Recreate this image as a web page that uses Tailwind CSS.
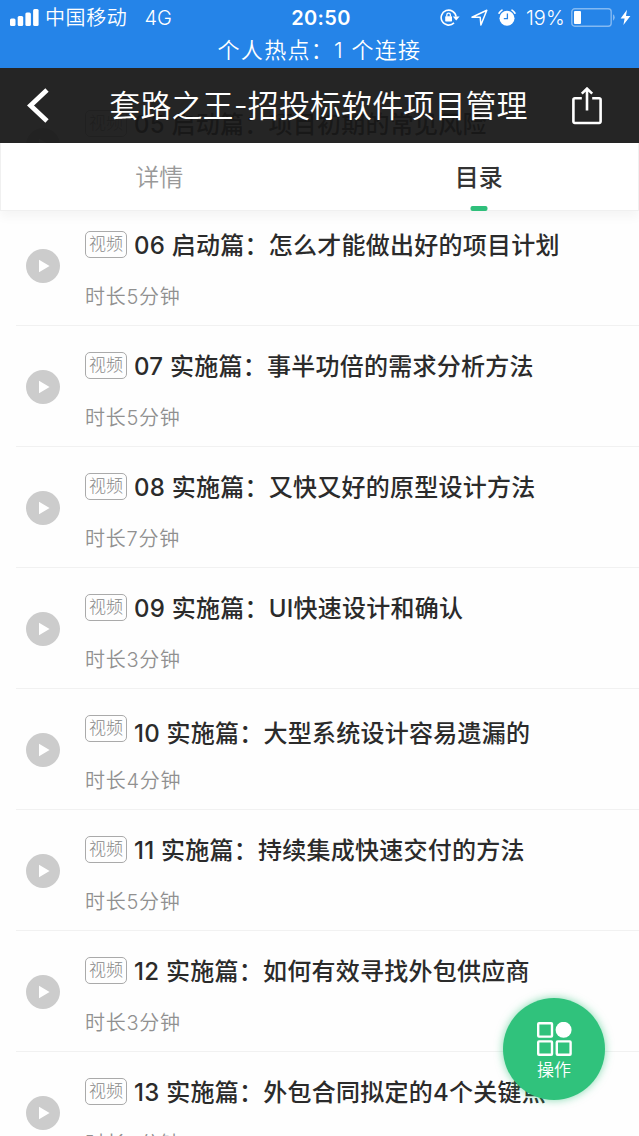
<!DOCTYPE html>
<html lang="zh-CN">
<head>
  <meta charset="UTF-8" />
  <title>套路之王-招投标软件项目管理</title>
  <script src="https://cdn.jsdelivr.net/npm/@tailwindcss/browser@4"></script>
</head>
<body class="bg-white font-['Inter','Noto_Sans_CJK_SC',sans-serif]">
<div class="relative w-[639px] h-[1136px] overflow-hidden bg-[#fefefe]">

  <ul id="lessonList" class="pt-[84px]"></ul>

  <!-- Fixed top: status bar, nav bar, tabs -->
  <header class="absolute inset-x-0 top-0 z-10">
    <div class="h-[68px] bg-[#2584e8] text-white">
      <div class="relative flex items-center h-[35px] pl-[10px] pr-[8px]">
        <svg class="w-[29px] h-[17px] shrink-0" viewBox="0 0 29 17" fill="currentColor">
          <rect x="0" y="9.5" width="5.5" height="7.5" rx="1.5"/>
          <rect x="7.7" y="7" width="5.5" height="10" rx="1.5"/>
          <rect x="15.4" y="3.5" width="5.5" height="13.5" rx="1.5"/>
          <rect x="23.1" y="0" width="5.5" height="17" rx="1.5"/>
        </svg>
        <span class="ml-[6px] pt-px text-[20px] leading-none tracking-[0.6px] font-[350]">中国移动</span>
        <span class="ml-[17px] pt-px text-[20px] leading-none font-[350]">4G</span>
        <span class="absolute inset-x-0 left-[3px] pt-px text-center text-[20px] leading-none font-semibold tracking-[0.3px]">20:50</span>

        <div class="ml-auto flex items-center">
          <!-- rotation lock -->
          <svg class="w-[20px] h-[17px]" viewBox="0 0 20 17" fill="none" stroke="currentColor" stroke-width="1.6">
            <path d="M16.1 7.6A7.5 7.5 0 1 0 14 13.9"/>
            <path d="M12.8 7.4h6.8l-3.4 4.2z" fill="currentColor" stroke="none"/>
            <rect x="5.2" y="7.2" width="6.8" height="5.2" rx=".6" fill="currentColor" stroke="none"/>
            <path d="M6.8 7.6V6a1.8 1.8 0 0 1 3.6 0v1.6" stroke-width="1.3"/>
          </svg>
          <!-- location -->
          <svg class="ml-[11px] w-[17px] h-[17px]" viewBox="0 0 17 17" fill="none" stroke="currentColor" stroke-width="1.5" stroke-linejoin="round">
            <path d="M1 8.2 15.8 1.2 9.9 16 9.2 8.2z"/>
          </svg>
          <!-- alarm -->
          <svg class="ml-[10px] w-[18px] h-[17px]" viewBox="0 0 18 17">
            <circle cx="9" cy="9.2" r="7.5" fill="currentColor"/>
            <path d="M1 4.2A10 10 0 0 1 4 1.2M17 4.2A10 10 0 0 0 14 1.2" fill="none" stroke="currentColor" stroke-width="1.6" stroke-linecap="round"/>
            <path d="M9.4 4.6V9.6H5.8" fill="none" stroke="#2584e8" stroke-width="1.3"/>
          </svg>
          <span class="ml-[10px] w-[41px] whitespace-nowrap pt-px text-[20px] leading-none font-[350]">19%</span>
          <!-- battery -->
          <svg class="ml-[4px] w-[46px] h-[19px]" viewBox="0 0 46 19">
            <rect x=".8" y=".8" width="39.4" height="17.4" rx="3" fill="none" stroke="#83b9f2" stroke-width="1.4"/>
            <rect x="3" y="3" width="7" height="13" rx="1" fill="#fff"/>
            <path d="M42 6.3a3.8 3.8 0 0 1 0 6.4z" fill="#83b9f2"/>
          </svg>
          <svg class="ml-[3px] w-[11px] h-[17px]" viewBox="0 0 11 17" fill="currentColor">
            <path d="M7 .8.6 9.4h4L3.4 16 10.4 7H6z"/>
          </svg>
        </div>
      </div>
      <p class="h-[30px] text-center text-[22px] leading-[30px] tracking-[1.3px] font-[350]">个人热点：1 个连接</p>
    </div>

    <nav class="flex items-center h-[75px] pl-[27px] pr-[37px] bg-[#171717]/94 text-white">
      <svg class="w-[22px] h-[36px] shrink-0" viewBox="0 0 22 36" fill="none" stroke="currentColor" stroke-width="4.8">
        <path d="M20 2 3.5 17.5 20 33"/>
      </svg>
      <h1 class="grow pl-[16px] pt-px text-center text-[31px] leading-[40px] tracking-[0.1px] whitespace-nowrap font-[350]">套路之王-招投标软件项目管理</h1>
      <svg class="w-[30px] h-[38px] shrink-0" viewBox="0 0 30 38" fill="none" stroke="currentColor" stroke-width="2.6">
        <path d="M9.8 11.3H2.8a1.4 1.4 0 0 0-1.4 1.4V34.6A1.4 1.4 0 0 0 2.8 36H27.2A1.4 1.4 0 0 0 28.6 34.6V12.7A1.4 1.4 0 0 0 27.2 11.3H20.2"/>
        <path d="M15 23.5V2M9.8 6.6 15 1.6 20.2 6.6"/>
      </svg>
    </nav>

    <div class="grid grid-cols-2 h-[68px] bg-white border-x border-b border-[#f0f0f0] shadow-[0_6px_10px_rgba(0,0,0,0.04)] text-[24px]">
      <a class="flex items-center justify-center pt-[2px] pr-[2px] font-[350] text-[#999]">详情</a>
      <a class="relative flex items-center justify-center pt-[2px] font-medium text-[#333]">目录
        <i class="absolute -bottom-px left-1/2 -translate-x-1/2 w-[17px] h-[5px] rounded-[2px] bg-[#2fbf7b]"></i>
      </a>
    </div>
  </header>

  <!-- Floating action button -->
  <button class="absolute left-[503px] top-[998px] z-20 flex flex-col items-center w-[102px] h-[102px] pt-[24px] rounded-full bg-[#30c27c] text-white shadow-[0_0_8px_rgba(48,194,124,0.6)]">
    <svg class="w-[35px] h-[34px]" viewBox="0 0 35 34" fill="none" stroke="currentColor" stroke-width="2.4">
      <rect x="1.2" y="1.2" width="13.8" height="13.4" rx=".8"/>
      <circle cx="26.6" cy="7.8" r="8" fill="currentColor" stroke="none"/>
      <rect x="1.2" y="19.4" width="13.8" height="13.4" rx=".8"/>
      <rect x="19.8" y="19.4" width="13.8" height="13.4" rx=".8"/>
    </svg>
    <span class="mt-[4px] text-[17px] leading-[20px] font-[350]">操作</span>
  </button>
</div>

<script>
  const lessons = [
    { no: '05', title: '启动篇：项目初期的常见风险', minutes: 5 },
    { no: '06', title: '启动篇：怎么才能做出好的项目计划', minutes: 5 },
    { no: '07', title: '实施篇：事半功倍的需求分析方法', minutes: 5 },
    { no: '08', title: '实施篇：又快又好的原型设计方法', minutes: 7 },
    { no: '09', title: '实施篇：UI快速设计和确认', minutes: 3 },
    { no: '10', title: '实施篇：大型系统设计容易遗漏的', minutes: 4, low: true },
    { no: '11', title: '实施篇：持续集成快速交付的方法', minutes: 5 },
    { no: '12', title: '实施篇：如何有效寻找外包供应商', minutes: 3 },
    { no: '13', title: '实施篇：外包合同拟定的4个关键点', minutes: 8 },
  ];

  const lessonList = document.getElementById('lessonList');

  lessons.forEach(lesson => {
    const li = document.createElement('li');
    li.className = "flex h-[121px] ml-[16px] pl-[10px] border-b border-[#f1f1f1]";
    li.innerHTML = `
      <svg class="mt-[44px] w-[34px] h-[34px] shrink-0" viewBox="0 0 34 34">
        <circle cx="17" cy="17" r="17" fill="#ccc"/>
        <path d="M13 10.8 23.6 17 13 23.2z" fill="#fff"/>
      </svg>
      <div class="ml-[25px] pt-[26px]">
        <div class="flex h-[28px] whitespace-nowrap">
          <span class="flex items-center justify-center w-[42px] h-[27px] border border-[#aaa] rounded-[5px] text-[17px] leading-none font-light text-[#888]">视频</span>
          <span class="${lesson.low ? 'pt-[5px]' : 'pt-px'} ml-[7px] text-[24px] leading-[28px] font-medium tracking-[0.25px] text-[#2b2b2b]">${lesson.no} ${lesson.title}</span>
        </div>
        <p class="mt-[24px] text-[20px] leading-[28px] tracking-[0.75px] font-[350] text-[#909090]">时长${lesson.minutes}分钟</p>
      </div>
    `;
    lessonList.appendChild(li);
  });
</script>
</body>
</html>
